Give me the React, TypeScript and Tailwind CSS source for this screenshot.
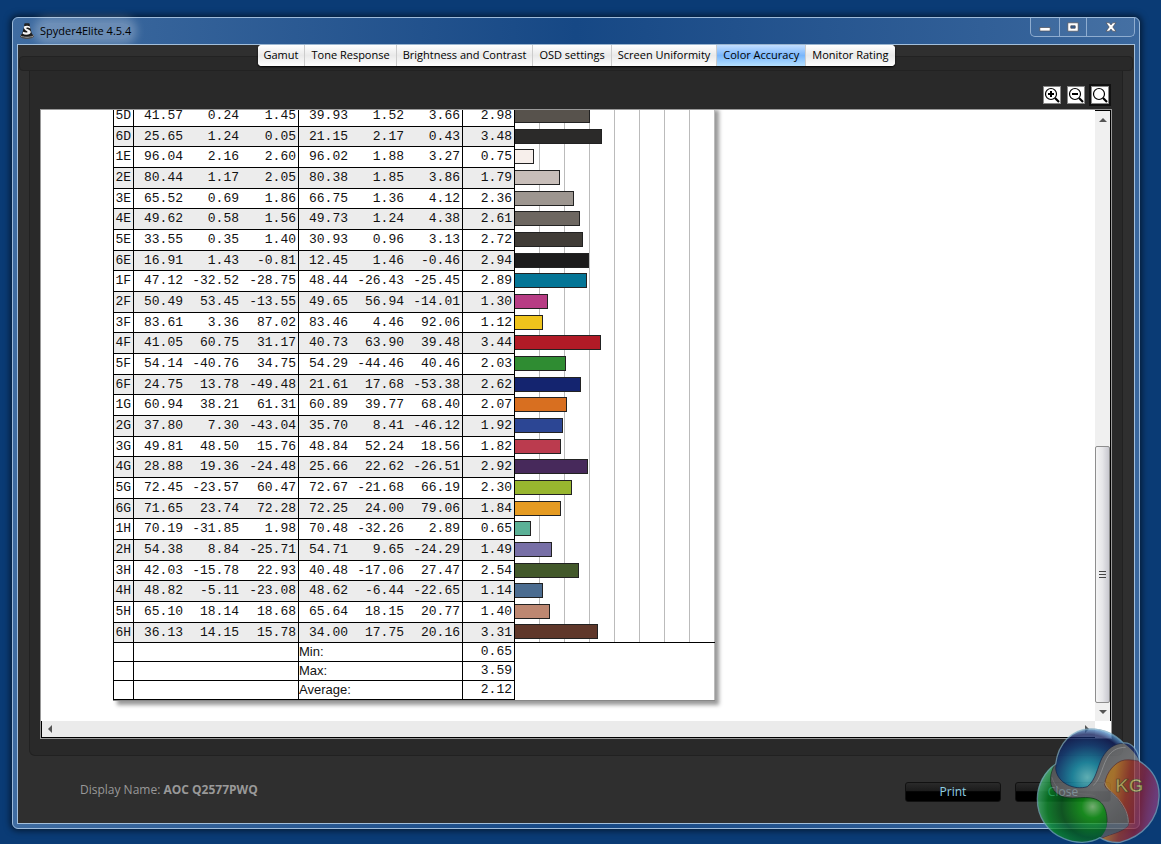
import { useState } from 'react';

interface Reading {
  id: string;
  target: [string, string, string];
  measured: [string, string, string];
  deltaE: string;
  color: string;
}

const TABS = [
  'Gamut',
  'Tone Response',
  'Brightness and Contrast',
  'OSD settings',
  'Screen Uniformity',
  'Color Accuracy',
  'Monitor Rating',
];

const READINGS: Reading[] = [
  { id: '5D', target: ['41.57', '0.24', '1.45'], measured: ['39.93', '1.52', '3.66'], deltaE: '2.98', color: '#57524c' },
  { id: '6D', target: ['25.65', '1.24', '0.05'], measured: ['21.15', '2.17', '0.43'], deltaE: '3.48', color: '#2b2a29' },
  { id: '1E', target: ['96.04', '2.16', '2.60'], measured: ['96.02', '1.88', '3.27'], deltaE: '0.75', color: '#f7efeb' },
  { id: '2E', target: ['80.44', '1.17', '2.05'], measured: ['80.38', '1.85', '3.86'], deltaE: '1.79', color: '#c8beb9' },
  { id: '3E', target: ['65.52', '0.69', '1.86'], measured: ['66.75', '1.36', '4.12'], deltaE: '2.36', color: '#9d9690' },
  { id: '4E', target: ['49.62', '0.58', '1.56'], measured: ['49.73', '1.24', '4.38'], deltaE: '2.61', color: '#6d6761' },
  { id: '5E', target: ['33.55', '0.35', '1.40'], measured: ['30.93', '0.96', '3.13'], deltaE: '2.72', color: '#403c37' },
  { id: '6E', target: ['16.91', '1.43', '-0.81'], measured: ['12.45', '1.46', '-0.46'], deltaE: '2.94', color: '#1c1b1b' },
  { id: '1F', target: ['47.12', '-32.52', '-28.75'], measured: ['48.44', '-26.43', '-25.45'], deltaE: '2.89', color: '#047596' },
  { id: '2F', target: ['50.49', '53.45', '-13.55'], measured: ['49.65', '56.94', '-14.01'], deltaE: '1.30', color: '#b73c84' },
  { id: '3F', target: ['83.61', '3.36', '87.02'], measured: ['83.46', '4.46', '92.06'], deltaE: '1.12', color: '#efc41c' },
  { id: '4F', target: ['41.05', '60.75', '31.17'], measured: ['40.73', '63.90', '39.48'], deltaE: '3.44', color: '#b11a26' },
  { id: '5F', target: ['54.14', '-40.76', '34.75'], measured: ['54.29', '-44.46', '40.46'], deltaE: '2.03', color: '#2f8c32' },
  { id: '6F', target: ['24.75', '13.78', '-49.48'], measured: ['21.61', '17.68', '-53.38'], deltaE: '2.62', color: '#14246f' },
  { id: '1G', target: ['60.94', '38.21', '61.31'], measured: ['60.89', '39.77', '68.40'], deltaE: '2.07', color: '#d86f20' },
  { id: '2G', target: ['37.80', '7.30', '-43.04'], measured: ['35.70', '8.41', '-46.12'], deltaE: '1.92', color: '#2c4694' },
  { id: '3G', target: ['49.81', '48.50', '15.76'], measured: ['48.84', '52.24', '18.56'], deltaE: '1.82', color: '#bb3b4e' },
  { id: '4G', target: ['28.88', '19.36', '-24.48'], measured: ['25.66', '22.62', '-26.51'], deltaE: '2.92', color: '#47295b' },
  { id: '5G', target: ['72.45', '-23.57', '60.47'], measured: ['72.67', '-21.68', '66.19'], deltaE: '2.30', color: '#98b62f' },
  { id: '6G', target: ['71.65', '23.74', '72.28'], measured: ['72.25', '24.00', '79.06'], deltaE: '1.84', color: '#e59b22' },
  { id: '1H', target: ['70.19', '-31.85', '1.98'], measured: ['70.48', '-32.26', '2.89'], deltaE: '0.65', color: '#5bb197' },
  { id: '2H', target: ['54.38', '8.84', '-25.71'], measured: ['54.71', '9.65', '-24.29'], deltaE: '1.49', color: '#776fa6' },
  { id: '3H', target: ['42.03', '-15.78', '22.93'], measured: ['40.48', '-17.06', '27.47'], deltaE: '2.54', color: '#43592b' },
  { id: '4H', target: ['48.82', '-5.11', '-23.08'], measured: ['48.62', '-6.44', '-22.65'], deltaE: '1.14', color: '#4b6c90' },
  { id: '5H', target: ['65.10', '18.14', '18.68'], measured: ['65.64', '18.15', '20.77'], deltaE: '1.40', color: '#bd8771' },
  { id: '6H', target: ['36.13', '14.15', '15.78'], measured: ['34.00', '17.75', '20.16'], deltaE: '3.31', color: '#5f372a' },
];

const SUMMARY = [
  { label: 'Min:', value: '0.65' },
  { label: 'Max:', value: '3.59' },
  { label: 'Average:', value: '2.12' },
];

// One unit of delta E on the chart
const PX_PER_UNIT = 25;

const SpyderIcon = () => (
  <svg viewBox="0 0 16 16" className="h-4 w-4" aria-hidden="true">
    <path d="M4.500 9.500L1 12.800c.4 3.600 13.600 3.600 14 0L11.500 9.500z" fill="#1c1c1c" />
    <path d="M1.300 12.600c1.200 2.200 12.200 2.200 13.400 0" fill="none" stroke="#a8a8a8" strokeWidth="1" />
    <path d="M2 14.300c2.500 1.700 9.500 1.700 12 0" fill="none" stroke="#555" strokeWidth=".8" />
    <path d="M5.600 1.500h4.800l1.200 4.500 1.400 5.500c-1.800 1.700-8.200 1.700-10 0L4.400 6z" fill="#141414" />
    <rect x="5.300" y=".3" width="5.400" height="2" rx=".9" fill="#222" />
    <path d="M4.900 3.600c1.700-1.300 4.700-.9 6.100.2l.3 1.600c-1.800-1.100-3.800-1.200-4.200-.4-.2 1 4.400 1.400 4.700 4 .3 2.500-5.200 3.600-8.200 1.700l.5-2c2 1.100 4.300 1 4.400.2.100-1-4.200-1.600-3.600-5.300z" fill="#f4f4f4" />
  </svg>
);

const ZoomIcon = ({ mode }: { mode: 'in' | 'out' | 'reset' }) => (
  <svg viewBox="0 0 16 16" className="h-4 w-4" aria-hidden="true" fill="none" stroke="#000">
    <circle cx="7" cy="7" r="5.500" strokeWidth="1.200" />
    <path d="M11 11l4 4" strokeWidth="2.200" />
    {mode !== 'reset' && <path d="M4 7h6" strokeWidth="2" />}
    {mode === 'in' && <path d="M7 4v6" strokeWidth="2" />}
  </svg>
);

const Arrow = ({ d }: { d: string }) => (
  <svg viewBox="0 0 8 8" className="h-2 w-2" aria-hidden="true">
    <path d={d} fill="#555" />
  </svg>
);

const TitleBar = () => (
  <div className="flex h-[26px] items-start justify-between">
    <div className="flex h-full items-center gap-[5px] pl-[2px] text-black">
      <SpyderIcon />
      <h1 className="rounded-full bg-white/25 text-[11px] leading-4 shadow-[0_0_8px_6px_rgba(255,255,255,0.25)]">
        Spyder4Elite 4.5.4
      </h1>
    </div>
    <div className="flex h-[19px] w-[105px] overflow-hidden rounded-b-[5px] border border-t-0 border-[#8fadd0] bg-white/5">
      <button aria-label="Minimize" className="flex w-[29px] items-center justify-center border-r border-[#8fadd0]">
        <svg viewBox="0 0 12 10" className="h-[10px] w-3">
          <path d="M.8 5.500h10.400v3.500H.8z" fill="#fff" stroke="#4c4c55" strokeWidth=".7" />
        </svg>
      </button>
      <button aria-label="Maximize" className="flex w-[27px] items-center justify-center border-r border-[#8fadd0]">
        <svg viewBox="0 0 12 10" className="h-[10px] w-3">
          <path d="M.8.8h10.400v8.400H.8z" fill="#fff" stroke="#4c4c55" strokeWidth=".7" />
          <path d="M3.800 3.800h4.400v2.400H3.800z" fill="#2f5f9b" stroke="#4c4c55" strokeWidth=".8" />
        </svg>
      </button>
      <button aria-label="Close window" className="flex flex-1 items-center justify-center">
        <svg viewBox="0 0 12 10" className="h-[10px] w-3">
          <path d="M1 .8h3.300L6 2.900 7.700.8H11L7.800 5 11 9.200H7.700L6 7.100 4.300 9.200H1L4.200 5z" fill="#fff" stroke="#4c4c55" strokeWidth=".7" />
        </svg>
      </button>
    </div>
  </div>
);

const ReadingRow = ({ reading, index }: { reading: Reading; index: number }) => {
  // Rows print at 20 and 21px in turn
  const height = index % 3 === 1 ? 'h-5' : 'h-[21px]';
  const cell = `border-b border-black pr-[2px] text-right ${index % 2 ? 'bg-[#ececec]' : 'bg-white'}`;
  const divided = `${cell} border-r`;

  return (
    <tr className={height}>
      <th scope="row" className={`${divided} border-l font-normal`}>{reading.id}</th>
      <td className={cell}>{reading.target[0]}</td>
      <td className={cell}>{reading.target[1]}</td>
      <td className={divided}>{reading.target[2]}</td>
      <td className={cell}>{reading.measured[0]}</td>
      <td className={cell}>{reading.measured[1]}</td>
      <td className={divided}>{reading.measured[2]}</td>
      <td className={divided}>{reading.deltaE}</td>
      <td
        className={`bg-[repeating-linear-gradient(90deg,#fff_0_24px,#bbb_24px_25px)] p-0 pb-[2px] ${
          index === READINGS.length - 1 ? 'border-b border-black' : ''
        }`}
      >
        <div
          className="h-[15px] border border-l-0 border-[#222]"
          style={{ width: Math.round(Number(reading.deltaE) * PX_PER_UNIT), backgroundColor: reading.color }}
        />
      </td>
    </tr>
  );
};

const AccuracyTable = () => (
  <table className="w-[602px] shrink-0 table-fixed border-separate border-spacing-0 border-b border-[#888] bg-white font-['Liberation_Mono',monospace] text-[13px] leading-[18px] text-[#111] shadow-[4px_4px_4px_#999]">
    <colgroup>
      <col className="w-[21px]" />
      <col className="w-[51px]" />
      <col className="w-14" />
      <col className="w-[58px]" />
      <col className="w-[51px]" />
      <col className="w-14" />
      <col className="w-[57px]" />
      <col className="w-[52px]" />
      <col className="w-[200px]" />
    </colgroup>
    <tbody>
      {READINGS.map((reading, i) => (
        <ReadingRow key={reading.id} reading={reading} index={i} />
      ))}
    </tbody>
    <tfoot>
      {SUMMARY.map((row) => (
        <tr key={row.label} className="h-[19px]">
          <td className="border-x border-b border-black" />
          <td colSpan={3} className="border-r border-b border-black" />
          <th
            scope="row"
            colSpan={3}
            className="border-r border-b border-black text-left font-['Liberation_Sans',sans-serif] font-normal"
          >
            {row.label}
          </th>
          <td className="border-r border-b border-black pr-[2px] text-right">{row.value}</td>
          <td className="border-r border-[#bbb]" />
        </tr>
      ))}
    </tfoot>
  </table>
);

const Viewer = () => (
  <div className="flex min-h-0 flex-1 flex-col border border-[#999] bg-white">
    <div className="flex min-h-0 flex-1">
      <div className="flex min-w-0 flex-1 flex-col justify-end overflow-hidden pb-5 pl-[72px]">
        <AccuracyTable />
      </div>
      <div className="flex w-4 flex-col items-stretch border-t border-r border-black bg-[#f0f0f0]">
        <button aria-label="Scroll up" className="flex h-[17px] items-center justify-center">
          <Arrow d="M0 6l4-4 4 4z" />
        </button>
        <div className="flex-1" />
        <div className="flex h-[257px] flex-col items-center justify-center gap-[2px] rounded-[2px] border border-[#8e8e8e] bg-linear-to-r from-[#f5f5f5] via-[#e6e6e9] to-[#c8c8cf]">
          <span className="h-px w-[7px] bg-[#444]" />
          <span className="h-px w-[7px] bg-[#444]" />
          <span className="h-px w-[7px] bg-[#444]" />
        </div>
        <button aria-label="Scroll down" className="flex h-[18px] items-center justify-center">
          <Arrow d="M0 2l4 4 4-4z" />
        </button>
      </div>
    </div>
    <div className="flex h-[17px]">
      <div className="flex flex-1 items-center justify-between border-b border-l border-black bg-[#ebebeb] px-1">
        <button aria-label="Scroll left"><Arrow d="M6 0L2 4l4 4z" /></button>
        <button aria-label="Scroll right"><Arrow d="M2 0l4 4-4 4z" /></button>
      </div>
      <div className="w-4 bg-white" />
    </div>
  </div>
);

const BrandLogo = () => (
  <svg
    viewBox="78 114 375 348"
    className="pointer-events-none absolute right-0 bottom-0 h-[116px] w-[125px]"
    role="img"
    aria-label="KG"
  >
    <defs>
      <radialGradient id="blue" gradientUnits="userSpaceOnUse" cx="232" cy="262" r="150">
        <stop offset="0" stopColor="#6fd6dc" />
        <stop offset=".3" stopColor="#1a9ab8" />
        <stop offset=".65" stopColor="#12407f" />
        <stop offset=".86" stopColor="#101d5c" />
        <stop offset="1" stopColor="#63aee6" />
      </radialGradient>
      <radialGradient id="green" gradientUnits="userSpaceOnUse" cx="248" cy="350" r="170">
        <stop offset="0" stopColor="#8ad487" />
        <stop offset=".2" stopColor="#12a51a" />
        <stop offset=".55" stopColor="#07601f" />
        <stop offset=".8" stopColor="#0b8f2c" />
        <stop offset="1" stopColor="#4cc07c" />
      </radialGradient>
      <linearGradient id="red" x1="0" y1="0" x2="1" y2=".25">
        <stop offset="0" stopColor="#c4942f" />
        <stop offset=".25" stopColor="#c9852c" />
        <stop offset=".5" stopColor="#a33a2c" />
        <stop offset=".75" stopColor="#8e2440" />
        <stop offset="1" stopColor="#8a3d7c" />
      </linearGradient>
      <linearGradient id="steel" x1="0" y1="0" x2="1" y2="1">
        <stop offset="0" stopColor="#3f4144" />
        <stop offset=".5" stopColor="#808285" />
        <stop offset="1" stopColor="#4b4d50" />
      </linearGradient>
    </defs>
    <g opacity=".76" strokeLinejoin="round">
      <path d="M137 222C145 160 185 117 242 117c45 0 75 18 98 42 24-3 44 20 49 55 38 24 60 62 58 107-3 65-45 118-117 136-25 2-45-4-60-14-30 18-75 18-108 3-50-20-80-65-80-119 0-42 22-82 55-105z" fill="url(#steel)" />
      <path d="M137 236C141 165 185 117 242 117c42 0 75 17 100 42-30 2-50 17-66 45-14 28-18 66-44 86-38 12-91-10-95-54z" fill="url(#blue)" stroke="#10204c" strokeWidth="2" />
      <path d="M134 223c-14 28-18 55-3 78 30 38 80 15 118 24 40 10 44 50 42 86 0 10-6 22-20 33-32 17-73 16-109 2-50-20-80-65-80-119 0-46 18-82 52-104z" fill="url(#green)" stroke="#0d3d1c" strokeWidth="2" />
      <path d="M389 214c38 24 60 62 58 107-3 65-45 118-117 136-25 2-42-3-56-12 32-15 64-18 81-38 8-28-17-61-35-86-12-17-35-22-36-39 4-35 32-68 60-72 20-2 33 2 45 4z" fill="url(#red)" stroke="#5b2530" strokeWidth="2" />
      <path d="M270 444c12-15 22-27 21-48 22 4 44 6 64 4-7 17-27 25-85 44z" fill="#5f6164" />
      <path d="M340 159c25-4 44 20 49 55-10-20-26-40-49-55z" fill="#1a2c68" />
      <path d="M250 286c22-16 28-66 47-91 14-17 30-23 50-23" fill="none" stroke="#c4c6c8" strokeWidth="3" opacity=".6" />
      <path d="M284 276c4 20 27 34 42 52 16 20 30 44 29 70" fill="none" stroke="#c4c6c8" strokeWidth="3" opacity=".6" />
      <path d="M126 262c8 28 25 42 48 46 26 4 62 2 82 10" fill="none" stroke="#8b8d90" strokeWidth="3" opacity=".6" />
      <path d="M137 222C145 160 185 117 242 117c45 0 75 18 98 42 24-3 44 20 49 55 38 24 60 62 58 107-3 65-45 118-117 136-25 2-45-4-60-14-30 18-75 18-108 3-50-20-80-65-80-119 0-42 22-82 55-105z" fill="none" stroke="#8cc4de" strokeWidth="4" opacity=".75" />
      <text
        x="316"
        y="305"
        className="font-['Liberation_Sans',sans-serif] font-bold"
        fontSize="56"
        fill="#d2c168"
        stroke="#4f3c22"
        strokeWidth="2"
      >
        KG
      </text>
    </g>
  </svg>
);

const actionButton =
  'h-5 w-24 rounded-[3px] border border-[#111] bg-linear-to-b from-[#2a2a2a] from-0% via-[#1b1b1b] via-45% to-black to-50% leading-4 text-[#8fd0e4]';

export default function App() {
  const [activeTab, setActiveTab] = useState('Color Accuracy');

  return (
    <div className="relative h-screen overflow-hidden bg-[#0a3b75] pt-[17px] pr-[21px] pb-[15px] pl-3 font-['Open_Sans',sans-serif] text-[12px]">
      <div className="flex h-full flex-col rounded-[6px] border border-[#9dbbdb] bg-linear-to-r from-[#3f6ca1] via-[#164885] to-[#3b689e] px-1 pb-1 shadow-[0_0_6px_2px_rgba(0,0,0,0.55)]">
        <TitleBar />
        <main className="flex min-h-0 flex-1 flex-col border border-[#a3bfdb] bg-[#2f2f2f]">
          <div className="relative flex h-[26px] shrink-0 items-start justify-center">
            <div className="absolute inset-x-px top-[11px] bottom-0 rounded-[4px] border border-[#222] bg-[#292929]" />
            <div role="tablist" className="relative flex h-[21px] divide-x divide-[#ccc] overflow-hidden rounded-[4px] bg-white text-[11px] shadow-[0_1px_2px_#000]">
              {TABS.map((tab) => (
                <button
                  key={tab}
                  role="tab"
                  aria-selected={tab === activeTab}
                  onClick={() => setActiveTab(tab)}
                  className={`px-[6px] text-black ${
                    tab === activeTab
                      ? 'bg-linear-to-b from-[#c3deff] from-0% via-[#79b6fb] via-50% to-[#b5e0ff]'
                      : 'bg-linear-to-b from-white from-0% via-[#e9e9e9] via-50% to-white'
                  }`}
                >
                  {tab}
                </button>
              ))}
            </div>
          </div>

          <section className="mx-[11px] flex min-h-0 flex-1 flex-col rounded-b-[6px] border border-t-0 border-[#212121] bg-[#292929] px-[10px] pt-[15px] pb-4">
            <div className="mb-[5px] flex justify-end gap-[6px] pr-[3px]">
              <button aria-label="Zoom in" className="h-[18px] w-[18px] border border-[#888] bg-white"><ZoomIcon mode="in" /></button>
              <button aria-label="Zoom out" className="h-[18px] w-[18px] border border-[#888] bg-white"><ZoomIcon mode="out" /></button>
              <button aria-label="Actual size" className="h-[18px] w-[18px] border border-[#888] bg-white outline-2 outline-[#111]"><ZoomIcon mode="reset" /></button>
            </div>
            <Viewer />
          </section>

          <footer className="flex h-[67px] shrink-0 items-start justify-between pt-[26px] pr-[23px] pl-[62px] text-[#999]">
            <p className="leading-4">
              Display Name: <strong>AOC Q2577PWQ</strong>
            </p>
            <div className="flex gap-[14px]">
              <button className={actionButton}>Print</button>
              <button className={actionButton}>Close</button>
            </div>
          </footer>
        </main>
      </div>
      <BrandLogo />
    </div>
  );
}
